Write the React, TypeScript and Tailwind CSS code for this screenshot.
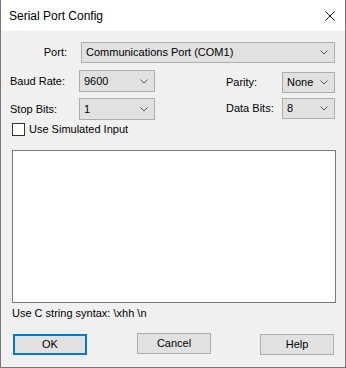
const Chevron = () => (
  <svg width="8" height="5" viewBox="0 0 8 5" className="shrink-0">
    <path d="M0.5 0.5 L4 4 L7.5 0.5" fill="none" stroke="#555" strokeWidth="1" />
  </svg>
);

const Combo = ({ value, className }: { value: string; className: string }) => (
  <div
    className={`flex items-center justify-between border border-[#adadad] bg-[#e1e1e1] pl-[4px] pr-[6px] ${className}`}
  >
    <span>{value}</span>
    <Chevron />
  </div>
);

export default function App() {
  return (
    <div className="flex h-[368px] w-[346px] flex-col border-x border-b border-[#777] bg-[#f0f0f0] font-['Liberation_Sans',Arial,sans-serif] text-[11px] leading-[13px] text-black">
      {/* title bar */}
      <div className="flex h-[31px] shrink-0 items-center justify-between bg-white pl-[8px] pr-[10px]">
        <span className="text-[12px] leading-none">Serial Port Config</span>
        <svg width="10" height="10" viewBox="0 0 10 10">
          <path d="M0.5 0.5 L9.5 9.5 M9.5 0.5 L0.5 9.5" stroke="#111" strokeWidth="1" />
        </svg>
      </div>

      <div className="flex flex-col">
        {/* port */}
        <div className="mt-[11px] flex items-center">
          <div className="w-[66px] text-right">Port:</div>
          <Combo value="Communications Port (COM1)" className="ml-[14px] h-[21px] w-[254px]" />
        </div>

        {/* baud / parity */}
        <div className="mt-[7px] flex items-start">
          <div className="ml-[9px] flex h-[22px] w-[69px] items-center">Baud Rate:</div>
          <Combo value="9600" className="h-[22px] w-[76px]" />
          <div className="ml-[71px] mt-[2px] flex h-[21px] w-[56px] items-center">Parity:</div>
          <Combo value="None" className="mt-[2px] h-[21px] w-[53px]" />
        </div>

        {/* stop / data */}
        <div className="mt-[5px] flex items-start">
          <div className="ml-[9px] flex h-[22px] w-[69px] items-center">Stop Bits:</div>
          <Combo value="1" className="h-[22px] w-[76px]" />
          <div className="ml-[71px] flex h-[21px] w-[56px] items-center">Data Bits:</div>
          <Combo value="8" className="h-[21px] w-[53px]" />
        </div>

        {/* simulated input */}
        <div className="ml-[11px] mt-[3px] flex items-center">
          <div className="h-[13px] w-[13px] border border-[#333] bg-white" />
          <span className="ml-[4px]">Use Simulated Input</span>
        </div>

        <div className="ml-[11px] mt-[14px] h-[153px] w-[324px] border border-[#7a7a7a] bg-white" />

        <div className="ml-[11px] mt-[4px]">Use C string syntax: \xhh \n</div>

        {/* buttons */}
        <div className="mt-[13px] flex items-start">
          <button className="ml-[12px] mt-[1px] h-[21px] w-[74px] border-2 border-[#0078d7] bg-[#e1e1e1]">
            OK
          </button>
          <button className="ml-[50px] h-[21px] w-[74px] border border-[#adadad] bg-[#e1e1e1]">
            Cancel
          </button>
          <button className="ml-[49px] mt-[1px] h-[21px] w-[74px] border border-[#adadad] bg-[#e1e1e1]">
            Help
          </button>
        </div>
      </div>
    </div>
  );
}
